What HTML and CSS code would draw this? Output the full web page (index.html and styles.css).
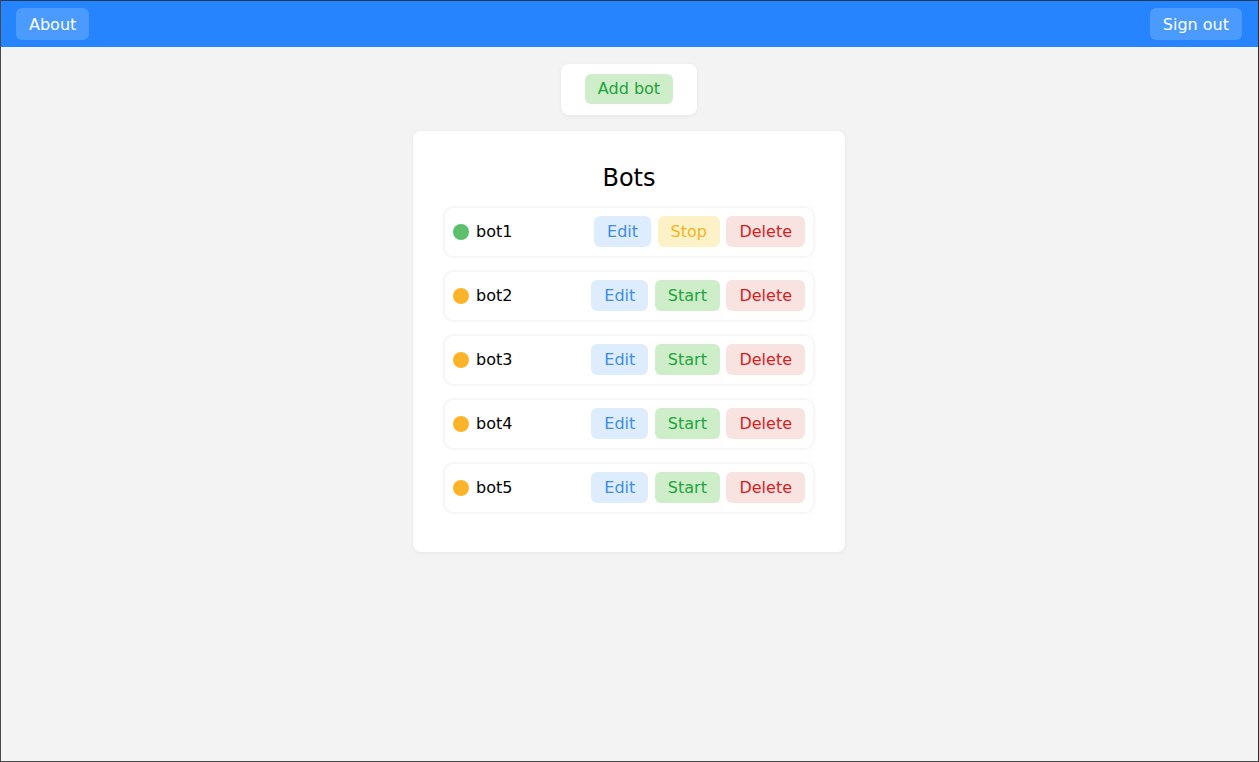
FILE: index.html
```html
<!DOCTYPE html>
<html>
<head>
<meta charset="utf-8">
<link rel="stylesheet" href="styles.css">
</head>
<body>
<div class="frame">
  <header class="topbar">
    <button class="nav-btn">About</button>
    <button class="nav-btn">Sign out</button>
  </header>
  <main class="content">
    <div class="panel add-panel">
      <button class="btn btn-green">Add bot</button>
    </div>
    <section class="panel bots-card">
      <h1 class="bots-title">Bots</h1>
      <ul class="bot-list">
        <li class="bot-row">
          <span class="dot dot-on"></span><span class="bot-name">bot1</span>
          <div class="actions"><button class="btn btn-blue">Edit</button><button class="btn btn-yellow">Stop</button><button class="btn btn-red">Delete</button></div>
        </li>
        <li class="bot-row">
          <span class="dot dot-off"></span><span class="bot-name">bot2</span>
          <div class="actions"><button class="btn btn-blue">Edit</button><button class="btn btn-green">Start</button><button class="btn btn-red">Delete</button></div>
        </li>
        <li class="bot-row">
          <span class="dot dot-off"></span><span class="bot-name">bot3</span>
          <div class="actions"><button class="btn btn-blue">Edit</button><button class="btn btn-green">Start</button><button class="btn btn-red">Delete</button></div>
        </li>
        <li class="bot-row">
          <span class="dot dot-off"></span><span class="bot-name">bot4</span>
          <div class="actions"><button class="btn btn-blue">Edit</button><button class="btn btn-green">Start</button><button class="btn btn-red">Delete</button></div>
        </li>
        <li class="bot-row">
          <span class="dot dot-off"></span><span class="bot-name">bot5</span>
          <div class="actions"><button class="btn btn-blue">Edit</button><button class="btn btn-green">Start</button><button class="btn btn-red">Delete</button></div>
        </li>
      </ul>
    </section>
  </main>
</div>
</body>
</html>
```
FILE: styles.css
```css
* { box-sizing: border-box; }
html, body { margin: 0; padding: 0; height: 100%; }
body {
  font-family: "DejaVu Sans", sans-serif;
  font-size: 16px;
  color: #111;
}
.frame {
  height: 762px;
  border: 1px solid #4a4a4a;
  border-top-color: #1f3d5a;
  border-right-color: #1d3330;
  background: #f3f3f3;
  display: flex;
  flex-direction: column;
}
.topbar {
  height: 46px;
  background: #2684ff;
  display: flex;
  justify-content: space-between;
  align-items: flex-start;
  padding: 7px 16px 0 15px;
}
.nav-btn {
  font: inherit;
  color: #fff;
  background: #4b9bff;
  border: none;
  border-radius: 6px;
  padding: 1px 13px 0;
  height: 32px;
  line-height: 31px;
}
.content {
  display: flex;
  flex-direction: column;
  align-items: center;
  padding: 17px 1px 0 0;
  gap: 16px;
}
.panel {
  background: #fff;
  border-radius: 8px;
  box-shadow: 0 1px 4px rgba(0,0,0,0.06);
}
.add-panel {
  padding: 10px 24px 11px;
  display: flex;
}
.btn {
  font: inherit;
  border: none;
  border-radius: 6px;
  padding: 0 13px;
  height: 31px;
  line-height: 31px;
  white-space: nowrap;
}
.add-panel .btn { height: 30px; line-height: 30px; }
.btn-green { background: #cdeec9; color: #22a33a; }
.btn-blue { background: #deedfd; color: #3d8ce6; }
.btn-yellow { background: #fdf1c8; color: #f2b51c; }
.btn-red { background: #f8e3e1; color: #d41f22; }
.bots-card {
  width: 432px;
  padding: 32px 32px 40px;
}
.bots-title {
  margin: 0 0 15px;
  text-align: center;
  font-weight: normal;
  font-size: 24px;
  line-height: 30px;
  color: #000;
}
.bot-list {
  list-style: none;
  margin: 0;
  padding: 0;
  display: flex;
  flex-direction: column;
  gap: 16px;
}
.bot-row {
  height: 48px;
  background: #fff;
  border-radius: 8px;
  box-shadow: 0 0 4px rgba(0,0,0,0.1);
  display: flex;
  align-items: flex-start;
  padding: 8px 8px 0;
}
.dot {
  width: 16px;
  height: 16px;
  border-radius: 50%;
  flex: none;
  margin-top: 8px;
}
.dot-on { background: #5cbf6b; }
.dot-off { background: #fbb42a; }
.bot-name {
  margin-left: 7px;
  line-height: 32px;
  color: #000;
}
.actions {
  margin-left: auto;
  display: flex;
  gap: 6.5px;
}
```
